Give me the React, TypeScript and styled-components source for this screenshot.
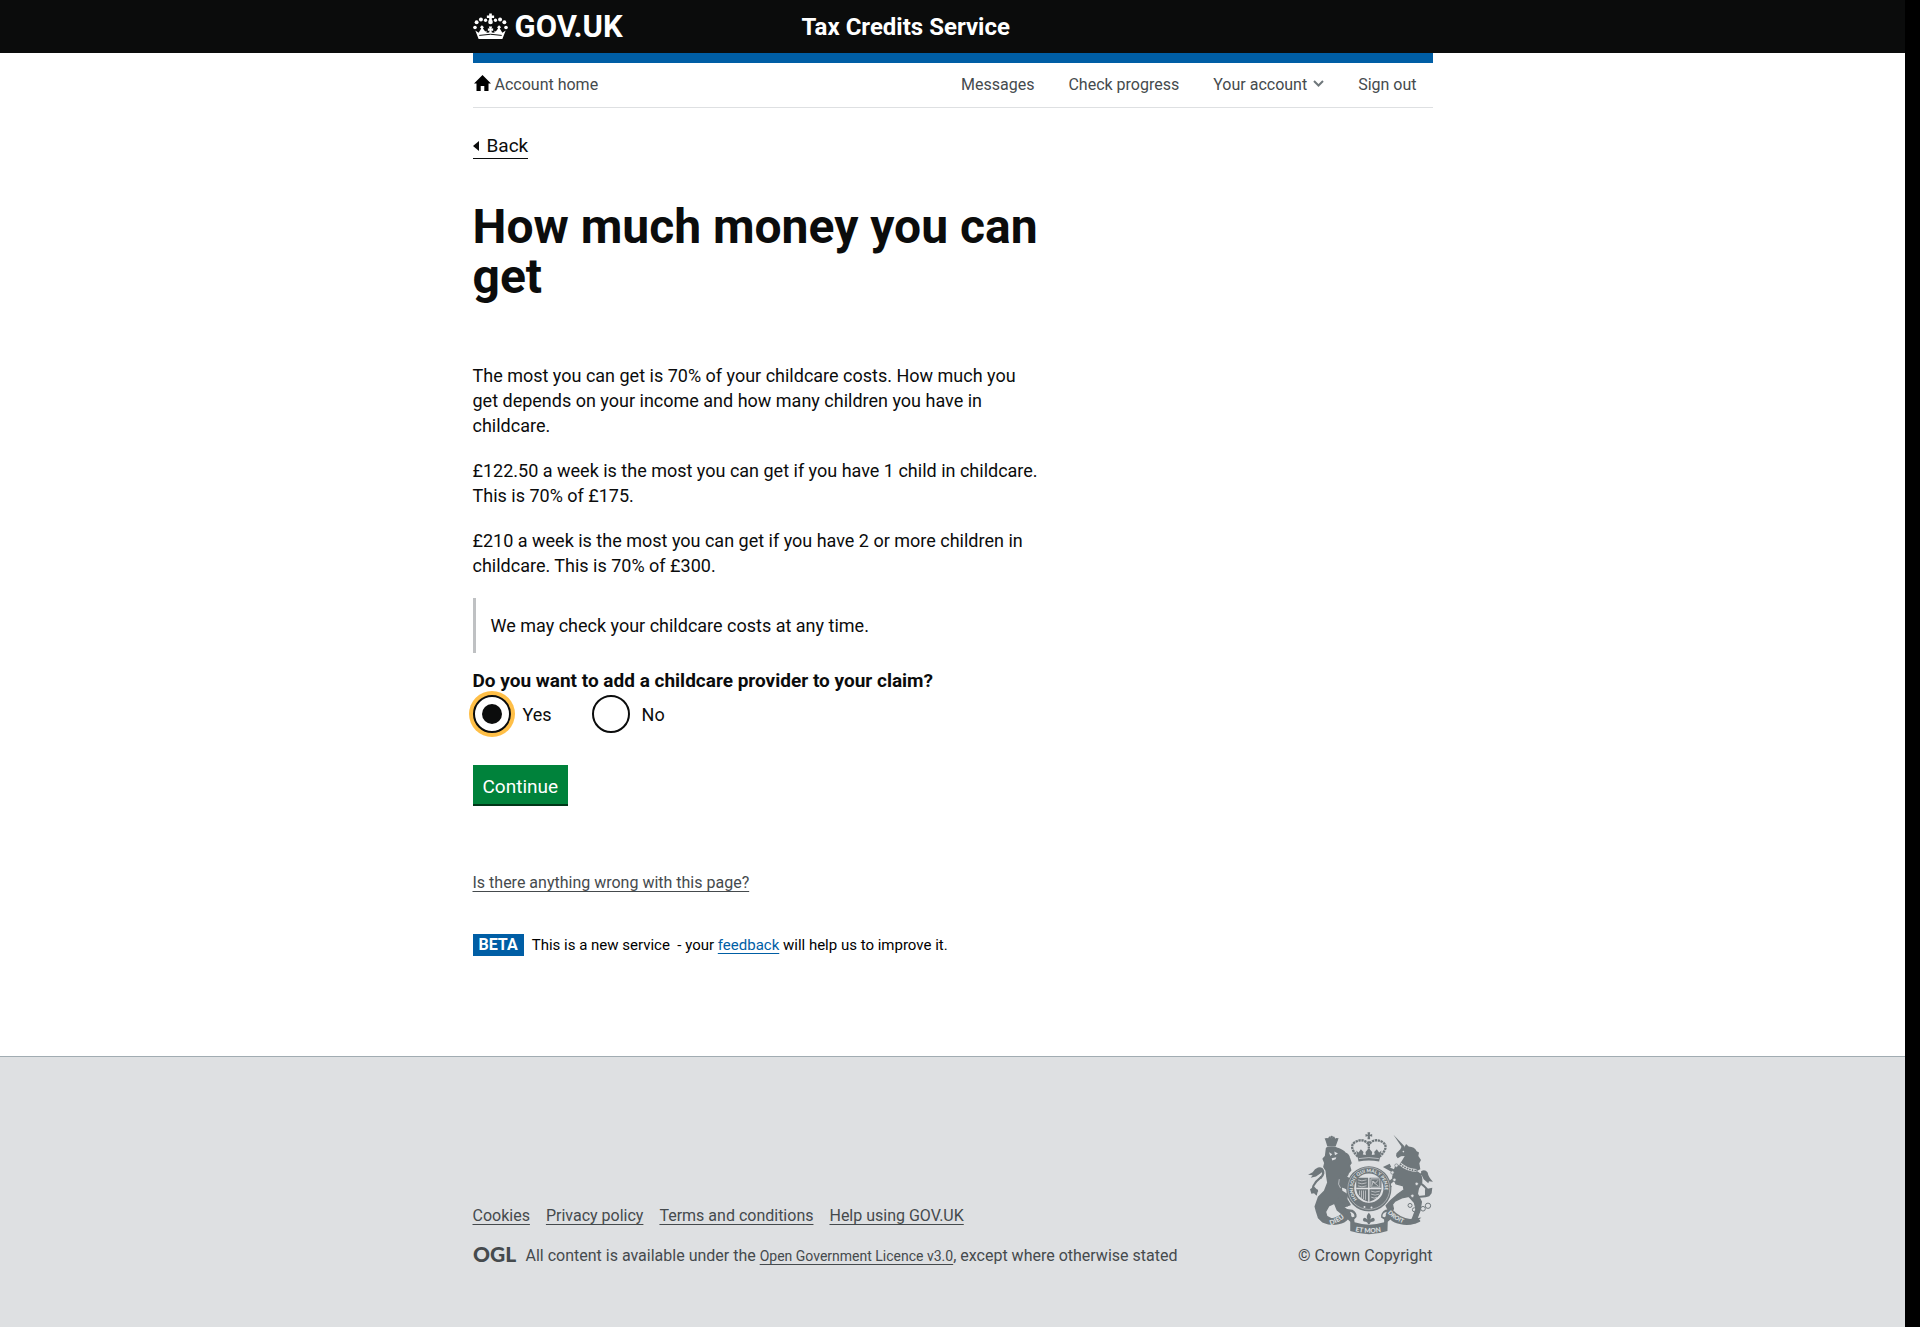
import React from "react";
import styled, { createGlobalStyle } from "styled-components";

const BLACK = "#0b0c0c";
const BLUE = "#005ea5";
const GREY = "#454a4d";
const CREST = "#6f777b";

const GlobalStyle = createGlobalStyle`
  *, *::before, *::after { box-sizing: border-box; }
  body {
    margin: 0;
    background: #fff;
    color: ${BLACK};
    font-family: Roboto, "Liberation Sans", sans-serif;
    font-size: 18px;
    line-height: 25px;
  }
  h1, p, ul, fieldset { margin: 0; padding: 0; border: 0; }
  ul { list-style: none; }
`;

const Shell = styled.div`
  display: grid;
  grid-template-columns: minmax(0, 1fr) 15px;
  min-height: 100vh;
`;

const Page = styled.div`
  display: flex;
  flex-direction: column;
`;

const Gutter = styled.div`
  background: #000;
`;

const Container = styled.div`
  width: 100%;
  max-width: 960px;
  margin: 0 auto;
`;

const Header = styled.header`
  background: ${BLACK};
  color: #fff;
`;

const HeaderRow = styled(Container)`
  display: grid;
  grid-template-columns: 329px 1fr;
  align-items: center;
  height: 53px;
`;

const Brand = styled.a`
  display: flex;
  align-items: center;
  gap: 7px;
  color: #fff;
  text-decoration: none;
  font-size: 31px;
  line-height: 30px;
  font-weight: 700;
`;

const ServiceName = styled.a`
  color: #fff;
  text-decoration: none;
  font-size: 24px;
  line-height: 30px;
  font-weight: 700;
`;

const Nav = styled.nav`
  display: flex;
  justify-content: space-between;
  align-items: center;
  height: 55px;
  padding-right: 16px;
  border-top: 10px solid ${BLUE};
  border-bottom: 1px solid #dee0e2;
  font-size: 16px;
  line-height: 20px;
`;

const NavList = styled.ul`
  display: flex;
  gap: 34px;
`;

const NavLink = styled.a`
  display: flex;
  align-items: center;
  gap: 4px;
  color: ${GREY};
  text-decoration: none;
`;

const NavButton = styled.button`
  display: flex;
  align-items: center;
  gap: 6px;
  padding: 0;
  border: 0;
  background: none;
  color: ${GREY};
  font: inherit;
`;

const Main = styled.main`
  flex: 1;
`;

const Column = styled.div`
  max-width: 570px;
`;

const BackLink = styled.a`
  display: flex;
  align-items: center;
  gap: 8px;
  width: fit-content;
  margin-top: 26px;
  border-bottom: 1px solid ${BLACK};
  color: ${BLACK};
  font-size: 19px;
  line-height: 24px;
  text-decoration: none;
`;

const Title = styled.h1`
  padding: 43px 0 61px;
  font-size: 48px;
  line-height: 50px;
  font-weight: 700;
`;

const Prose = styled.div`
  display: flex;
  flex-direction: column;
  gap: 20px;
`;

const Inset = styled.p`
  padding: 15px;
  border-left: 3px solid #bfc1c3;
`;

const Question = styled.fieldset`
  margin-top: 15px;
`;

const Legend = styled.legend`
  padding: 0;
  font-size: 19px;
  font-weight: 700;
`;

const Options = styled.div`
  display: flex;
  gap: 40px;
  padding-top: 2px;
`;

const Option = styled.label`
  display: flex;
  align-items: center;
  gap: 12px;
`;

const Radio = styled.input`
  appearance: none;
  display: grid;
  place-items: center;
  width: 38px;
  height: 38px;
  margin: 0;
  border: 2px solid ${BLACK};
  border-radius: 50%;
  outline: none;
  background: #fff;

  &:checked {
    box-shadow: 0 0 0 4px #ffbf47;
  }

  &:checked::before {
    content: "";
    width: 20px;
    height: 20px;
    border-radius: 50%;
    background: ${BLACK};
  }
`;

const Continue = styled.button`
  display: block;
  margin-top: 32px;
  padding: 9px 10px 5px;
  border: 0;
  background: #00823b;
  box-shadow: 0 2px 0 #003618;
  color: #fff;
  font: inherit;
  font-size: 19px;
`;

const ReportLink = styled.a`
  display: inline-block;
  margin-top: 69px;
  color: ${GREY};
  font-size: 16px;
  line-height: 20px;
  text-underline-offset: 3px;
`;

const Phase = styled.p`
  display: flex;
  align-items: center;
  gap: 8px;
  margin-top: 40px;
  padding-bottom: 80px;
  font-size: 15px;
  line-height: 20px;
  color: #000;
`;

const Tag = styled.strong`
  padding: 1px 6px;
  background: ${BLUE};
  color: #fff;
  font-size: 16px;
`;

const FeedbackLink = styled.a`
  color: ${BLUE};
  text-underline-offset: 3px;
`;

const Footer = styled.footer`
  padding: 75px 0 61px;
  border-top: 1px solid #a1acb2;
  background: #dee0e2;
  color: ${GREY};
  font-size: 16px;
  line-height: 20px;
`;

const FooterRow = styled(Container)`
  display: flex;
  justify-content: space-between;
  align-items: flex-end;
`;

const FooterLinks = styled.ul`
  display: flex;
  gap: 16px;
  margin-bottom: 20px;
`;

const FooterLink = styled.a`
  color: ${GREY};
  text-underline-offset: 3px;
`;

const LicenceLink = styled(FooterLink)`
  font-size: 14px;
`;

const Licence = styled.p`
  display: flex;
  gap: 5px;
`;

const Copyright = styled.a`
  display: flex;
  flex-direction: column;
  align-items: flex-end;
  gap: 11px;
  color: ${GREY};
  text-decoration: none;
`;

function Crown() {
  return (
    <svg width="35" height="27" viewBox="8 22 106 80" fill="#fff" aria-hidden="true">
      <path d="M57 23h8v6h7v7h-7v8h-8v-8h-7v-7h7z" />
      <circle cx="61" cy="48" r="7" />
      <circle cx="46" cy="43" r="5" /><circle cx="76" cy="43" r="5" />
      <circle cx="32" cy="41" r="6" /><circle cx="90" cy="41" r="6" />
      <circle cx="19" cy="49" r="6" /><circle cx="103" cy="49" r="6" />
      <circle cx="14" cy="65" r="5.5" /><circle cx="108" cy="65" r="5.5" />
      <path d="M15 74l10 7 8-13-4-4 6-6 6 6-3 4 7 9 4-2v6l8-1 1-6-5 2v-9l5 2-2-7h10l-2 7 5-2v9l-5-2 1 6 8 1v-6l4 2 7-9-3-4 6-6 6 6-4 4 8 13 10-7-10 26H25z" />
      <path d="M27 89q34-7 68 0" fill="none" stroke={BLACK} strokeWidth="3" />
    </svg>
  );
}

function Home() {
  return (
    <svg width="18" height="20" viewBox="0 0 18 20" fill="#000" aria-hidden="true">
      <path d="M9.500 0L18 8.500h-2.500V16h-4.200v-5H7.700v5H3.500V8.500H1z" />
    </svg>
  );
}

function Ogl() {
  return (
    <svg width="48" height="20" viewBox="0 0 48 20" fill={GREY} overflow="visible" role="img" aria-label="OGL">
      <text x="0" y="16" fontFamily="Lato" fontWeight="900" fontSize="21">OGL</text>
    </svg>
  );
}

function Crest() {
  const bg = "#dee0e2";
  return (
    <svg width="125" height="103" viewBox="84 34 376 310" fill={CREST} overflow="visible" role="img" aria-label="Royal coat of arms">
      <defs>
        <path id="garter" d="M232 236A48 48 0 1 1 302 236" />
        <path id="dieu" d="M152 314Q182 306 210 277" />
        <path id="mon" d="M226 333Q268 343 316 332" />
        <path id="droit" d="M323 278Q348 305 390 315" />
      </defs>
      {/* lion */}
      <g>
        <path d="M138 64l-4-12 9 3 5-8 7 6 7-6 5 8 9-3-4 12-5 14q-13-4-25 0z" />
        <circle cx="155" cy="49" r="4" /><circle cx="141" cy="56" r="4" /><circle cx="170" cy="56" r="4" />
        <path d="M140 83q14-7 31 0 17 5 25 15 10 3 12 14l5 15-5 7 4 15-7 8q-2 12-16 16 11 10 18 12 12 2 15 14l-10 10-17-7-12-4 2 14 17 11-2 13 10 17-20 7 18 14-4 4h-20l-12-10-8-20-18 8-10 18 4 14 14 8 0 8h-26l-12-12-7-22-3-12 10-28 18-18 10-26-3-17-2-19-7-11 3-12-5-12 7-8z" stroke={CREST} strokeWidth="5" strokeLinejoin="round" />
        <path d="M178 166l24 10 14 12M176 232l30 22" fill="none" stroke={CREST} strokeWidth="13" />
        <path d="M147 95l10 6-6 5zm16-2l11 6-9 5zm-8 20l14-3-2 6-10 4z" fill={bg} />
        <path d="M178 176l-2 15 6 12" fill="none" stroke={bg} strokeWidth="2" />
        <path d="M114 210q-20 4-14-14 7-14 24-27" fill="none" stroke={CREST} strokeWidth="6" />
        <path d="M121 173q16-16 3-27" fill="none" stroke={CREST} strokeWidth="7" />
        <path d="M132 150q-5-12-18-9-10 4-16 14l-14 8 14 1-6 8 16-4 14-10zM90 206l12-8 12 12-4 16-8-8-8 2z" />
      </g>
      {/* unicorn */}
      <g>
        <path d="M341 42l34 36-6 6z" />
        <path d="M350 98l12-12 4-9 8 3 5-10 8 8q18 1 24 14l7 4-2 10 8 12-5 10 3 18-12 6q-30-2-50-22l8-12 7-12-11 1-10 6-5-7z" />
        <path d="M346 142l14-8q22 18 52 20 16 8 14 32l-10 18-3 16 12 24-4 26-9 24 8 8-14 6-9-10 12-32-5-20-16-18-22 4-20 10-8 10 3 14-15 4-7-14 14-16 18-16 22-16-2-12-22-6-10-20z" stroke={CREST} strokeWidth="4" strokeLinejoin="round" />
        <path d="M358 158l-24-10-14-8 12-6M364 178l-22-2-16 14 6 12" fill="none" stroke={CREST} strokeWidth="10" />
        <path d="M361 130q20 18 49 20" fill="none" stroke={bg} strokeWidth="9" />
        <path d="M361 130q20 18 49 20" fill="none" stroke={CREST} strokeWidth="5" strokeDasharray="5 3" />
        <circle cx="371" cy="93" r="2.500" fill={bg} />
        <path d="M404 228q44 4 44-10-4-14-26-30-10-15 1-26 8-9 18-2" fill="none" stroke={CREST} strokeWidth="6" />
        <path d="M424 152q12-8 20 4 2 14 16 28l-12-2-2 6-14-12q-8-12-8-24zM436 206l22-4-2 16-8 10-12-2z" />
        <g fill="none" stroke={CREST} strokeWidth="3">
          <circle cx="391" cy="255" r="6" /><circle cx="404" cy="268" r="6" /><circle cx="418" cy="253" r="5" />
          <circle cx="430" cy="265" r="7" /><circle cx="445" cy="256" r="8" />
        </g>
        <g fill={bg} stroke={CREST} strokeWidth="2">
          <circle cx="350" cy="135" r="5" /><circle cx="338" cy="156" r="5" /><circle cx="344" cy="178" r="5" />
          <circle cx="398" cy="226" r="5" /><circle cx="411" cy="190" r="5" />
        </g>
      </g>
      {/* crown above the shield */}
      <g>
        <path d="M263 35h8l-1 7 7-2v8l-7-2 1 10h-8l1-10-7 2v-8l7 2z" />
        <g fill="none" stroke={CREST} strokeWidth="7">
          <path d="M234 108q-30-30-8-44 21-12 38 4 4 3 6 0 17-16 38-4 22 14-8 44" strokeDasharray="7 2" />
          <path d="M267 62v44" strokeDasharray="6 2" />
        </g>
        <path d="M229 90l7 6 7-10 8 8-2 8 9 1-1-9 10-11 10 11-1 9 9-1-2-8 8-8 7 10 7-6-7 33q-31-6-62 0z" />
        <path d="M237 114q30-6 60 0" fill="none" stroke={bg} strokeWidth="2" />
      </g>
      {/* garter and quartered shield */}
      <circle cx="267" cy="205" r="68" />
      <circle cx="267" cy="204" r="63" fill="none" stroke={bg} strokeWidth="1.500" />
      <circle cx="267" cy="203" r="44" fill={bg} />
      <path d="M229 172h76v36q-4 26-38 37-34-11-38-37z" />
      <path d="M267 168v78M229 204h76" stroke={bg} strokeWidth="4" />
      <g fill="none" stroke={bg} strokeWidth="2">
        <path d="M234 178l12 3 14-3M234 187l12 3 14-3M234 196l12 3 14-3" />
        <path d="M276 196l4-14 7 6 8-9M276 182l20 15M273 175h27v25h-27z" />
        <path d="M239 210v14M245 210v22M251 210v26M257 210v28" />
        <path d="M274 212l12 3 14-3M274 221l12 3 12-3M274 230l9 3 9-3" />
      </g>
      <text fill={bg} fontFamily="Lato" fontWeight="900" fontSize="14">
        <textPath href="#garter">HONI SOIT QUI MAL Y PENSE</textPath>
      </text>
      <circle cx="254" cy="260" r="3" fill={bg} /><circle cx="275" cy="261" r="3" fill={bg} />
      {/* motto scroll */}
      <path d="M113 291l34 4q32-3 53-29l18 2q14 8 12 22l-7 7 1 9q44 14 89 0v-9l-9-6q-2-14 13-23l19-3q22 26 55 31l34-5-20 19q-22 8-45 1-20-5-28-14l-8 7-1 28q-55 19-112 0v-28l-7-7q-8 10-28 15-24 5-45-4z" />
      <path d="M210 274q13 2 14 14-8 5-10-1 1-7-4-13zM321 274q-14 3-13 14 8 5 10-1-1-7 3-13z" fill={bg} />
      <g fill={bg} fontFamily="Lato" fontWeight="900">
        <text fontSize="20"><textPath href="#dieu">DIEU</textPath></text>
        <text fontSize="20"><textPath href="#mon">ET MON</textPath></text>
        <text fontSize="18"><textPath href="#droit">DROIT</textPath></text>
      </g>
      <path d="M246 274h44v32h-44z" fill={bg} />
      <path d="M267 277q10 10 4 20 12-10 14 2-1 6-9 5-5 0-7 8h-4q-2-8-7-8-8 1-9-5 2-12 14-2-6-10 4-20z" />
    </svg>
  );
}

export default function App() {
  return (
    <Shell>
      <GlobalStyle />
      <Page>
        <Header>
          <HeaderRow>
            <Brand href="#"><Crown />GOV.UK</Brand>
            <ServiceName href="#">Tax Credits Service</ServiceName>
          </HeaderRow>
        </Header>
        <Container>
          <Nav>
            <NavLink href="#"><Home />Account home</NavLink>
            <NavList>
              <li><NavLink href="#">Messages</NavLink></li>
              <li><NavLink href="#">Check progress</NavLink></li>
              <li>
                <NavButton type="button">
                  Your account
                  <svg width="11" height="10" viewBox="0 0 11 10" fill="none" stroke={CREST} strokeWidth="2" aria-hidden="true">
                    <path d="M1 1l4.500 4.500L10 1" />
                  </svg>
                </NavButton>
              </li>
              <li><NavLink href="#">Sign out</NavLink></li>
            </NavList>
          </Nav>
        </Container>
        <Main>
          <Container>
            <Column>
              <BackLink href="#">
                <svg width="6" height="10" viewBox="0 0 6 10" fill={BLACK} aria-hidden="true"><path d="M6 0v10L0 5z" /></svg>
                Back
              </BackLink>
              <Title>How much money you can get</Title>
              <Prose>
                <p>The most you can get is 70% of your childcare costs. How much you get depends on your income and how many children you have in childcare.</p>
                <p>£122.50 a week is the most you can get if you have 1 child in childcare. This is 70% of £175.</p>
                <p>£210 a week is the most you can get if you have 2 or more children in childcare. This is 70% of £300.</p>
                <Inset>We may check your childcare costs at any time.</Inset>
              </Prose>
              <Question>
                <Legend>Do you want to add a childcare provider to your claim?</Legend>
                <Options>
                  <Option><Radio type="radio" name="provider" value="yes" defaultChecked />Yes</Option>
                  <Option><Radio type="radio" name="provider" value="no" />No</Option>
                </Options>
              </Question>
              <Continue type="submit">Continue</Continue>
              <ReportLink href="#">Is there anything wrong with this page?</ReportLink>
              <Phase>
                <Tag>BETA</Tag>
                <span>This is a new service &nbsp;- your <FeedbackLink href="#">feedback</FeedbackLink> will help us to improve it.</span>
              </Phase>
            </Column>
          </Container>
        </Main>
        <Footer>
          <FooterRow>
            <div>
              <FooterLinks>
                <li><FooterLink href="#">Cookies</FooterLink></li>
                <li><FooterLink href="#">Privacy policy</FooterLink></li>
                <li><FooterLink href="#">Terms and conditions</FooterLink></li>
                <li><FooterLink href="#">Help using GOV.UK</FooterLink></li>
              </FooterLinks>
              <Licence>
                <Ogl />
                <span>All content is available under the <LicenceLink href="#">Open Government Licence v3.0</LicenceLink>, except where otherwise stated</span>
              </Licence>
            </div>
            <Copyright href="#"><Crest />© Crown Copyright</Copyright>
          </FooterRow>
        </Footer>
      </Page>
      <Gutter />
    </Shell>
  );
}
